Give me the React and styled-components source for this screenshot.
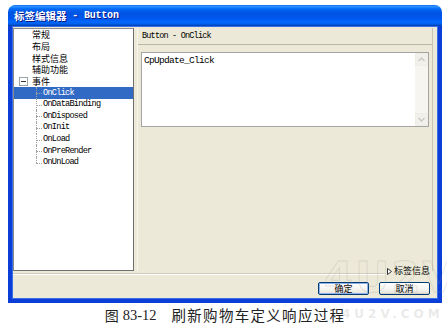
import React from "react";
import styled, { createGlobalStyle } from "styled-components";

const GlobalStyle = createGlobalStyle`
  html, body { margin: 0; padding: 0; background: #fff; }
  body { font-family: "Noto Sans CJK SC", "Noto Sans", sans-serif; }
`;

const Page = styled.div`
  position: relative;
  width: 447px;
  height: 328px;
  overflow: hidden;
  background: #fff;
  padding: 5px 0 0 8px;
  box-sizing: border-box;
`;

const Window = styled.div`
  width: 434px;
  display: flex;
  flex-direction: column;
`;

const TitleBar = styled.div`
  height: 21px;
  border-radius: 7px 7px 0 0;
  background: linear-gradient(180deg, #0058ee 0%, #3593ff 5%, #288eff 9%, #127dff 13%, #036ffc 17%, #0262ee 24%, #0057e5 34%, #0054e3 44%, #0055eb 60%, #005bf5 70%, #026afe 80%, #0062ef 88%, #0052d6 94%, #0040ab 100%);
  display: flex;
  align-items: center;
  padding-left: 6px;
  color: #fff;
  text-shadow: 1px 1px 0 #0a1883;
`;

const TitleCn = styled.span`
  font-family: "Noto Sans CJK SC", sans-serif;
  font-weight: 700;
  font-size: 10.5px;
`;

const TitleEn = styled.span`
  font-family: "Liberation Mono", monospace;
  font-weight: 700;
  font-size: 10px;
  letter-spacing: -0.2px;
  white-space: pre;
`;

const Frame = styled.div`
  box-sizing: border-box;
  background: #ece9d8;
  border: 4px solid #0a3ed6;
  border-top: 0;
  box-shadow: inset 0 0 0 1px #3a6ee8;
  padding: 2px 5px 4px 1px;
  height: 277px;
  display: flex;
  flex-direction: column;
`;

const MainRow = styled.div`
  display: flex;
  height: 243px;
  gap: 3px;
`;

const Tree = styled.div`
  width: 121px;
  box-sizing: border-box;
  background: #fff;
  border: 1px solid #8c8c8c;
  border-right-color: #6f6f6f;
  border-bottom-color: #6f6f6f;
  display: flex;
  flex-direction: column;
`;

const Row = styled.div`
  height: 11.65px;
  display: flex;
  align-items: center;
  padding-left: ${(p) => p.$indent}px;
  background: ${(p) => (p.$selected ? "#316ac5" : "transparent")};
  color: ${(p) => (p.$selected ? "#fff" : "#000")};
`;

const CnText = styled.span`
  font-family: "Noto Sans CJK SC", sans-serif;
  font-size: 9px;
  line-height: 11px;
`;

const EnText = styled.span`
  font-family: "Liberation Mono", monospace;
  font-size: 8.6px;
  letter-spacing: -0.75px;
  line-height: 11px;
`;

const ExpandBox = styled.span`
  position: relative;
  width: 9px;
  height: 9px;
  box-sizing: border-box;
  border: 1px solid #9aa3a8;
  background: #fff;
  margin-right: 4px;
  &::after {
    content: "";
    position: absolute;
    left: 1px;
    right: 1px;
    top: 3px;
    height: 1px;
    background: #333;
  }
`;

const Guide = styled.span`
  position: relative;
  width: 7px;
  align-self: stretch;
  &::before {
    content: "";
    position: absolute;
    left: 0;
    top: 0;
    bottom: ${(p) => (p.$last ? "50%" : "0")};
    border-left: 1px dotted #a0a0a0;
  }
  &::after {
    content: "";
    position: absolute;
    left: 0;
    top: 50%;
    width: 6px;
    border-top: 1px dotted #a0a0a0;
  }
`;

const RightPanel = styled.div`
  flex: 1;
  display: flex;
  flex-direction: column;
  border-left: 1px solid #f7f5ec;
  border-right: 1px solid #c6c3b3;
`;

const PanelHeader = styled.div`
  height: 17px;
  box-sizing: border-box;
  border-bottom: 1px solid #b9b6a6;
  display: flex;
  align-items: center;
  padding-left: 4px;
  font-family: "Liberation Mono", monospace;
  font-size: 8.5px;
  letter-spacing: -0.8px;
  color: #000;
`;

const EditorWrap = styled.div`
  padding: 7px 3px 0 3px;
`;

const TextBox = styled.div`
  height: 75px;
  box-sizing: border-box;
  border: 1px solid #a5a5a5;
  background: #fff;
  display: flex;
`;

const TextContent = styled.div`
  flex: 1;
  padding: 2px 2px;
  font-family: "Liberation Mono", monospace;
  font-size: 9.5px;
  letter-spacing: -0.7px;
  line-height: 12px;
  color: #000;
`;

const ScrollBar = styled.div`
  width: 13px;
  background: #f6f5f0;
  display: flex;
  flex-direction: column;
  justify-content: space-between;
`;

const ArrowBtn = styled.div`
  height: 13px;
  box-sizing: border-box;
  border: 1px solid #eeede6;
  background: #f1f0ea;
  display: flex;
  align-items: center;
  justify-content: center;
`;

const SepRow = styled.div`
  margin-top: -5px;
  height: 10px;
  display: flex;
  align-items: flex-end;
  padding-right: 3px;
`;

const SepLine = styled.div`
  flex: 1;
  height: 0;
  border-top: 1px solid #d0cdbd;
  border-bottom: 1px solid #fff;
  margin-bottom: 1px;
`;

const SepLabel = styled.div`
  display: flex;
  align-items: center;
  gap: 2px;
  margin-left: 2px;
  font-family: "Noto Sans CJK SC", sans-serif;
  font-size: 9px;
  line-height: 10px;
  color: #000;
`;

const ButtonRow = styled.div`
  margin-top: 6px;
  display: flex;
  justify-content: flex-end;
  gap: 10px;
  padding-right: 3px;
`;

const Button = styled.div`
  width: 51px;
  height: 13px;
  box-sizing: border-box;
  border: 1px solid #003c74;
  border-radius: 2px;
  background: linear-gradient(180deg, #ffffff 0%, #f4f3ee 60%, #e3e0d6 100%);
  box-shadow: ${(p) => (p.$default ? "inset 0 0 0 1px #8fb2ee" : "inset 0 -1px 0 #d6d0c5")};
  display: flex;
  align-items: center;
  justify-content: center;
  font-family: "Noto Sans CJK SC", sans-serif;
  font-size: 9px;
  line-height: 11px;
  color: #000;
`;

const Caption = styled.div`
  margin-top: 3px;
  width: 434px;
  display: flex;
  justify-content: center;
  align-items: center;
  height: 18px;
  color: #222;
`;

const CapFig = styled.span`
  font-family: "Noto Sans CJK SC", sans-serif;
  font-size: 14px;
  line-height: 18px;
  margin-right: 4px;
`;

const CapNum = styled.span`
  font-family: "Liberation Serif", serif;
  font-size: 14.5px;
  line-height: 18px;
  margin-right: 15px;
`;

const CapText = styled.span`
  font-family: "Noto Sans CJK SC", sans-serif;
  font-size: 14.5px;
  line-height: 18px;
  letter-spacing: 1.3px;
`;

const WatermarkBig = styled.div`
  position: absolute;
  left: 324px;
  top: 256px;
  font-family: "DejaVu Sans", sans-serif;
  font-weight: 700;
  font-size: 42px;
  line-height: 44px;
  letter-spacing: 2px;
  color: transparent;
  -webkit-text-stroke: 1px rgba(150, 150, 150, 0.22);
  pointer-events: none;
`;

const WatermarkSmall = styled.div`
  position: absolute;
  left: 342px;
  top: 306px;
  font-family: "DejaVu Sans", sans-serif;
  font-weight: 700;
  font-size: 12px;
  line-height: 16px;
  letter-spacing: 4px;
  color: rgba(170, 170, 170, 0.25);
  pointer-events: none;
`;

const Chevron = ({ up }) => (
  <svg width="7" height="5" viewBox="0 0 7 5">
    <path d={up ? "M0.5 4 L3.5 1 L6.5 4" : "M0.5 1 L3.5 4 L6.5 1"} fill="none" stroke="#c9c8c0" strokeWidth="1.3" />
  </svg>
);

const Triangle = () => (
  <svg width="5" height="7" viewBox="0 0 5 7">
    <path d="M0.5 0.5 L4.5 3.5 L0.5 6.5 Z" fill="#fff" stroke="#333" strokeWidth="1" />
  </svg>
);

const topItems = ["常规", "布局", "样式信息", "辅助功能"];
const events = ["OnClick", "OnDataBinding", "OnDisposed", "OnInit", "OnLoad", "OnPreRender", "OnUnLoad"];

export default function App() {
  return (
    <>
      <GlobalStyle />
      <Page>
        <Window>
          <TitleBar>
            <TitleCn>标签编辑器</TitleCn>
            <TitleEn> - Button</TitleEn>
          </TitleBar>
          <Frame>
            <MainRow>
              <Tree>
                {topItems.map((t) => (
                  <Row key={t} $indent={18}>
                    <CnText>{t}</CnText>
                  </Row>
                ))}
                <Row $indent={5}>
                  <ExpandBox />
                  <CnText>事件</CnText>
                </Row>
                {events.map((e, i) => (
                  <Row key={e} $indent={22} $selected={i === 0}>
                    <Guide $last={i === events.length - 1} />
                    <EnText>{e}</EnText>
                  </Row>
                ))}
              </Tree>
              <RightPanel>
                <PanelHeader>Button - OnClick</PanelHeader>
                <EditorWrap>
                  <TextBox>
                    <TextContent>CpUpdate_Click</TextContent>
                    <ScrollBar>
                      <ArrowBtn><Chevron up /></ArrowBtn>
                      <ArrowBtn><Chevron /></ArrowBtn>
                    </ScrollBar>
                  </TextBox>
                </EditorWrap>
              </RightPanel>
            </MainRow>
            <SepRow>
              <SepLine />
              <SepLabel>
                <Triangle />
                <span>标签信息</span>
              </SepLabel>
            </SepRow>
            <ButtonRow>
              <Button $default>确定</Button>
              <Button>取消</Button>
            </ButtonRow>
          </Frame>
        </Window>
        <Caption>
          <CapFig>图</CapFig>
          <CapNum>83-12</CapNum>
          <CapText>刷新购物车定义响应过程</CapText>
        </Caption>
        <WatermarkBig>4U2V</WatermarkBig>
        <WatermarkSmall>4U2V.COM</WatermarkSmall>
      </Page>
    </>
  );
}
